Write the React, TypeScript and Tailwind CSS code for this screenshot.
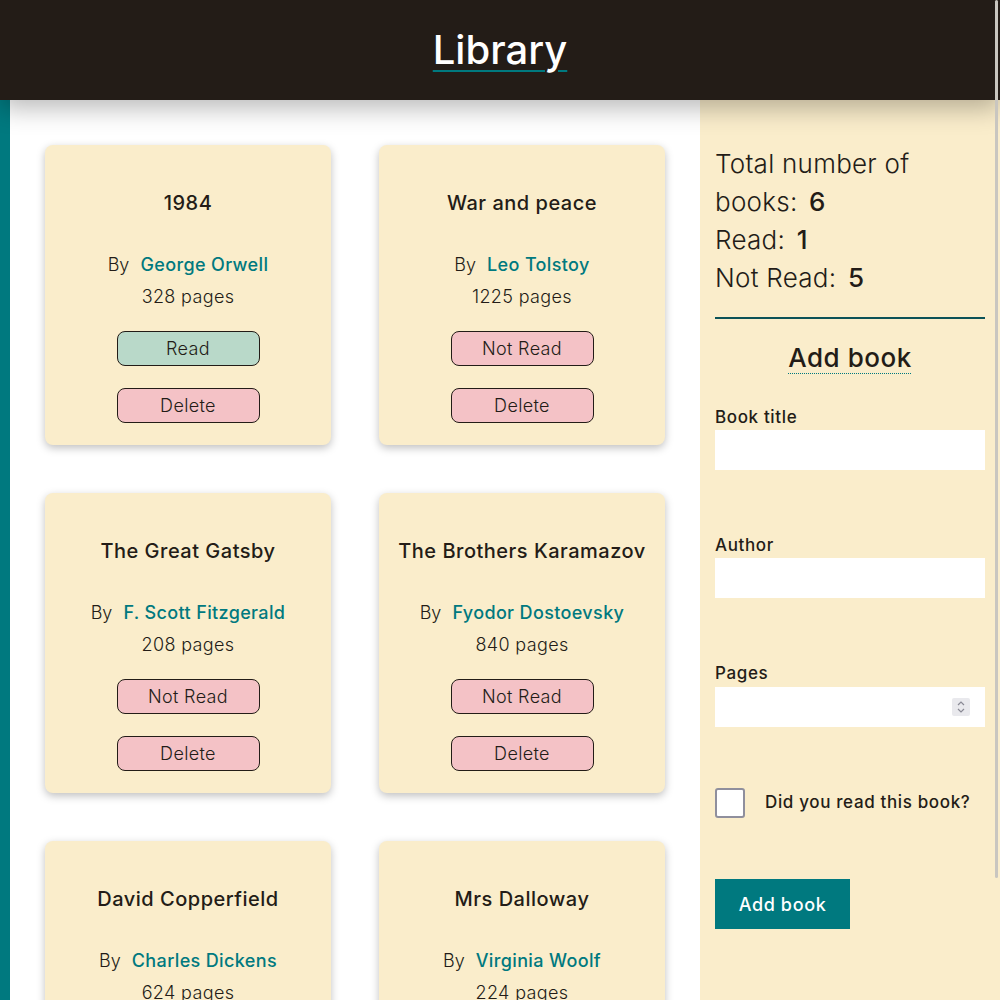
import React, { useState } from 'react'

type Book = {
    title: string
    author: string
    pages: number
    read: boolean
}

const initialBooks: Book[] = [
    { title: '1984', author: 'George Orwell', pages: 328, read: true },
    { title: 'War and peace', author: 'Leo Tolstoy', pages: 1225, read: false },
    { title: 'The Great Gatsby', author: 'F. Scott Fitzgerald', pages: 208, read: false },
    { title: 'The Brothers Karamazov', author: 'Fyodor Dostoevsky', pages: 840, read: false },
    { title: 'David Copperfield', author: 'Charles Dickens', pages: 624, read: false },
    { title: 'Mrs Dalloway', author: 'Virginia Woolf', pages: 224, read: false },
]

const BookCard: React.FC<{ book: Book; onToggle: () => void; onDelete: () => void }> = ({ book, onToggle, onDelete }) => {
    return (
        <div className="flex flex-col items-center w-[286px] h-[300px] shrink-0 bg-[#faedcb] rounded-lg shadow-[0_3px_8px_rgba(0,0,0,0.25)] pt-[44px] text-[#231c17]">
            <h2 className="text-[20px] leading-[28px] font-medium text-center tracking-[0.025em]">{book.title}</h2>
            <p className="mt-[32px] text-[18px] leading-[32px] font-light">
                By <span className="ml-[6px] font-medium text-[#00797f] tracking-[0.02em]">{book.author}</span>
            </p>
            <p className="text-[18px] leading-[32px] font-light tracking-[0.02em]">{book.pages} pages</p>
            <button
                onClick={onToggle}
                className={`mt-[18px] w-[143px] h-[35px] rounded-lg border border-[#231c17] text-[18px] font-light tracking-[0.02em] ${book.read ? 'bg-[#b9d9c9]' : 'bg-[#f4c2c6]'}`}>
                {book.read ? 'Read' : 'Not Read'}
            </button>
            <button
                onClick={onDelete}
                className="mt-[22px] w-[143px] h-[35px] rounded-lg border border-[#231c17] bg-[#f4c2c6] text-[18px] font-light tracking-[0.02em]">
                Delete
            </button>
        </div>
    )
}

const App: React.FC = () => {

    const [books, setBooks] = useState<Book[]>(initialBooks)
    const readCount = books.filter((b) => b.read).length

    return (
        <div className="relative flex flex-col h-screen overflow-hidden bg-white text-[#231c17]" style={{ fontFamily: 'Inter, "Noto Sans", sans-serif' }}>
            <header className="relative z-10 flex items-center justify-center h-[100px] shrink-0 bg-[#231c17] shadow-[0_8px_24px_rgba(0,0,0,0.28)]">
                <h1 className="text-[40px] font-medium text-white underline decoration-[#00797f] decoration-2 underline-offset-[6px]">Library</h1>
            </header>
            <div className="flex flex-1 min-h-0">
                <main className="flex-1 border-l-[10px] border-[#00797f] pt-[45px] pl-[35px] overflow-hidden">
                    <div className="grid grid-cols-[286px_286px] gap-x-[48px] gap-y-[48px]">
                        {books.map((book, i) => (
                            <BookCard
                                key={book.title}
                                book={book}
                                onToggle={() => setBooks((prev) => prev.map((b, j) => (j === i ? { ...b, read: !b.read } : b)))}
                                onDelete={() => setBooks((prev) => prev.filter((_, j) => j !== i))} />
                        ))}
                    </div>
                </main>
                <aside className="w-[300px] shrink-0 bg-[#faedcb] pt-[145px] -mt-[100px] pl-[15px] pr-[15px]">
                    <div className="text-[26px] leading-[38px] font-light tracking-[0.01em]">
                        <p>Total number of books: <span className="ml-1 font-medium">{books.length}</span></p>
                        <p>Read: <span className="ml-1 font-medium">{readCount}</span></p>
                        <p>Not Read: <span className="ml-1 font-medium">{books.length - readCount}</span></p>
                    </div>
                    <div className="mt-[20px] h-[2px] bg-[#0b5257]"></div>
                    <h2 className="mt-[20px] text-center text-[26px] leading-[38px] font-medium tracking-[0.02em]">
                        <span className="underline decoration-dotted decoration-[#00797f] decoration-1 underline-offset-[6px]">Add book</span>
                    </h2>
                    <form className="mt-[28px] flex flex-col tracking-[0.04em]" onSubmit={(e) => e.preventDefault()}>
                        <label className="text-[17px] leading-[24px] font-medium">Book title</label>
                        <input type="text" className="mt-[1px] h-[40px] bg-white outline-none px-2" />
                        <label className="mt-[63px] text-[17px] leading-[24px] font-medium">Author</label>
                        <input type="text" className="mt-[1px] h-[40px] bg-white outline-none px-2" />
                        <label className="mt-[63px] text-[17px] leading-[24px] font-medium">Pages</label>
                        <div className="relative mt-[2px]">
                            <input type="number" className="w-full h-[40px] bg-white outline-none px-2 [appearance:textfield]" />
                            <span className="absolute right-[15px] top-[11px] flex items-center justify-center w-[18px] h-[18px] bg-[#e9e9ed] rounded-[2px]">
                                <svg width="10" height="14" viewBox="0 0 10 14" fill="none" stroke="#8a8a95" strokeWidth="1.2">
                                    <path d="M2 5 L5 2 L8 5" />
                                    <path d="M2 9 L5 12 L8 9" />
                                </svg>
                            </span>
                        </div>
                        <div className="mt-[61px] flex items-center">
                            <input type="checkbox" className="appearance-none w-[30px] h-[30px] bg-white border-2 border-[#8f8f9d] rounded-[3px]" />
                            <span className="ml-[20px] text-[17px] font-medium">Did you read this book?</span>
                        </div>
                        <button type="submit" className="mt-[61px] w-[135px] h-[50px] bg-[#00797f] text-white text-[18px] font-medium">Add book</button>
                    </form>
                </aside>
            </div>
            <div className="absolute right-[2px] top-0 w-[3px] h-[878px] bg-[#c9c6c0] rounded-full z-20"></div>
        </div>
    )
}

export default App
